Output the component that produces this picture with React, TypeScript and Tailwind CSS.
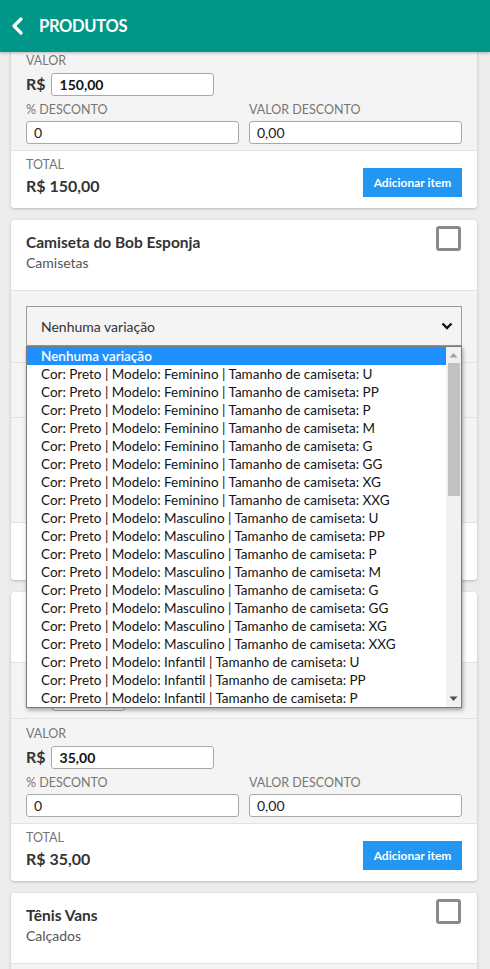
import React from "react";

const variations: string[] = [
  "Cor: Preto | Modelo: Feminino | Tamanho de camiseta: U",
  "Cor: Preto | Modelo: Feminino | Tamanho de camiseta: PP",
  "Cor: Preto | Modelo: Feminino | Tamanho de camiseta: P",
  "Cor: Preto | Modelo: Feminino | Tamanho de camiseta: M",
  "Cor: Preto | Modelo: Feminino | Tamanho de camiseta: G",
  "Cor: Preto | Modelo: Feminino | Tamanho de camiseta: GG",
  "Cor: Preto | Modelo: Feminino | Tamanho de camiseta: XG",
  "Cor: Preto | Modelo: Feminino | Tamanho de camiseta: XXG",
  "Cor: Preto | Modelo: Masculino | Tamanho de camiseta: U",
  "Cor: Preto | Modelo: Masculino | Tamanho de camiseta: PP",
  "Cor: Preto | Modelo: Masculino | Tamanho de camiseta: P",
  "Cor: Preto | Modelo: Masculino | Tamanho de camiseta: M",
  "Cor: Preto | Modelo: Masculino | Tamanho de camiseta: G",
  "Cor: Preto | Modelo: Masculino | Tamanho de camiseta: GG",
  "Cor: Preto | Modelo: Masculino | Tamanho de camiseta: XG",
  "Cor: Preto | Modelo: Masculino | Tamanho de camiseta: XXG",
  "Cor: Preto | Modelo: Infantil | Tamanho de camiseta: U",
  "Cor: Preto | Modelo: Infantil | Tamanho de camiseta: PP",
  "Cor: Preto | Modelo: Infantil | Tamanho de camiseta: P",
];

function Label({ children }: { children: React.ReactNode }) {
  return <div className="text-[12.5px] leading-[16px] text-[#767676] uppercase">{children}</div>;
}

function ValorSection({ valor, covered }: { valor: string; covered?: boolean }) {
  return (
    <div className="bg-[#f4f4f4] px-[15px] pt-[7px] pb-[6px] border-t border-[#e2e2e2]">
      <div className={covered ? "invisible" : ""}>
        <Label>Valor</Label>
        <div className="mt-[3px] flex items-center gap-[5px]">
          <span className="text-[16px] font-bold text-[#333]">R$</span>
          <div className="w-[163px] h-[23px] bg-white border border-[#a9a9a9] rounded-[3px] flex items-center pl-[8px] text-[14px] font-bold text-[#111]">
            {valor}
          </div>
        </div>
        <div className="mt-[6px] flex gap-[10px]">
          <div className="w-[213px]">
            <Label>% Desconto</Label>
            <div className="mt-[3px] h-[23px] bg-white border border-[#a9a9a9] rounded-[3px] flex items-center pl-[7px] text-[14px] text-[#222]">
              0
            </div>
          </div>
          <div className="w-[213px]">
            <Label>Valor desconto</Label>
            <div className="mt-[3px] h-[23px] bg-white border border-[#a9a9a9] rounded-[3px] flex items-center pl-[7px] text-[14px] text-[#222]">
              0,00
            </div>
          </div>
        </div>
      </div>
    </div>
  );
}

function TotalSection({ total, covered }: { total: string; covered?: boolean }) {
  return (
    <div className="bg-white border-t border-[#e2e2e2] px-[15px] pt-[6px] pb-[11px] rounded-b-[4px]">
      <div className={`flex justify-between items-end ${covered ? "invisible" : ""}`}>
        <div className="pb-[1px]">
          <Label>Total</Label>
          <div className="mt-[3px] text-[16px] leading-[20px] font-bold text-[#333]">{total}</div>
        </div>
        <button className="w-[99px] h-[29px] bg-[#2196f3] text-white text-[12px] font-bold">Adicionar item</button>
      </div>
    </div>
  );
}

function Checkbox() {
  return <div className="w-[25px] h-[25px] border-[3px] border-[#8a8a8a] rounded-[3px] bg-white" />;
}

function CardHeader({ title, subtitle }: { title?: string; subtitle?: string }) {
  return (
    <div className="h-[70px] bg-white flex justify-between pl-[15px] pr-[16px] pt-[6px] rounded-t-[4px]">
      <div className="pt-[6px]">
        {title && <div className="text-[15.5px] leading-[20px] font-bold text-[#333]">{title}</div>}
        {subtitle && <div className="mt-[2px] text-[14px] leading-[18px] text-[#555]">{subtitle}</div>}
      </div>
      <Checkbox />
    </div>
  );
}

function QtySection({ pt }: { pt: string }) {
  return (
    <div className={`bg-[#f4f4f4] border-t border-[#e2e2e2] pl-[41px] pb-[7px] ${pt}`}>
      <div className="w-[73px] h-[24px] bg-white border border-[#a9a9a9] rounded-[3px]" />
    </div>
  );
}

function Card({ children }: { children: React.ReactNode }) {
  return (
    <div className="ml-[11px] w-[466px] rounded-[4px] bg-white shadow-[0_1px_3px_rgba(0,0,0,0.22)] relative">
      {children}
    </div>
  );
}

export default function App() {
  return (
    <div
      className="relative w-[490px] h-[969px] overflow-hidden bg-[#ececec]"
      style={{ fontFamily: "Lato, 'Open Sans', sans-serif" }}
    >
      {/* app bar */}
      <div className="absolute top-0 left-0 right-0 h-[52px] bg-[#009688] z-20 flex items-center shadow-[0_1px_3px_rgba(0,0,0,0.25)]">
        <svg className="ml-[10px]" width="16" height="20" viewBox="0 0 16 20">
          <polyline points="11,3 4,10 11,17" fill="none" stroke="white" strokeWidth="3.2" strokeLinecap="round" strokeLinejoin="round" />
        </svg>
        <span className="ml-[13px] text-white text-[16.5px] font-bold tracking-[-0.3px]">PRODUTOS</span>
      </div>

      <div className="flex flex-col gap-[12px] pt-[45px]">
        {/* card 1 (scrolled) */}
        <Card>
          <ValorSection valor="150,00" />
          <TotalSection total="R$ 150,00" />
        </Card>

        {/* card 2 */}
        <Card>
          <CardHeader title="Camiseta do Bob Esponja" subtitle="Camisetas" />
          <div className="bg-[#f4f4f4] border-t border-[#e2e2e2] px-[15px] pt-[15px] pb-[16px]">
            <div className="relative z-10">
              <div className="h-[40px] border border-[#9a9a9a] bg-[#f4f4f4] flex items-center justify-between pl-[14px] pr-[8px] text-[14px] text-[#333]">
                <span>Nenhuma variação</span>
                <svg width="12" height="8" viewBox="0 0 12 8">
                  <polyline points="1.5,1.5 6,6 10.5,1.5" fill="none" stroke="#111" strokeWidth="2.4" strokeLinejoin="miter" />
                </svg>
              </div>
              {/* open list */}
              <div className="absolute left-0 right-0 top-[40px] h-[362px] bg-white border border-[#7a7a7a] shadow-[1px_2px_4px_rgba(0,0,0,0.35)] flex">
                <div className="flex-1 overflow-hidden">
                  <div className="h-[18px] bg-[#1e90ff] text-white text-[13.5px] leading-[18px] pl-[14px] font-semibold">
                    Nenhuma variação
                  </div>
                  {variations.map((v) => (
                    <div key={v} className="h-[18px] text-[13.5px] leading-[18px] pl-[14px] text-[#141414] whitespace-nowrap">
                      {v}
                    </div>
                  ))}
                </div>
                <div className="w-[15px] bg-[#f1f1f1] flex flex-col items-center">
                  <svg className="mt-[5px]" width="9" height="6" viewBox="0 0 9 6">
                    <polygon points="0.5,5.5 4.5,1 8.5,5.5" fill="#a3a3a3" />
                  </svg>
                  <div className="mt-[5px] w-[12px] h-[133px] bg-[#c1c1c1]" />
                  <div className="flex-1" />
                  <svg className="mb-[5px]" width="9" height="6" viewBox="0 0 9 6">
                    <polygon points="0.5,0.5 4.5,5 8.5,0.5" fill="#505050" />
                  </svg>
                </div>
              </div>
            </div>
          </div>
          <QtySection pt="pt-[23px]" />
          <ValorSection valor="150,00" covered />
          <TotalSection total="R$ 150,00" covered />
        </Card>

        {/* card 3 */}
        <Card>
          <CardHeader />
          <QtySection pt="pt-[24px]" />
          <ValorSection valor="35,00" />
          <TotalSection total="R$ 35,00" />
        </Card>

        {/* card 4 */}
        <Card>
          <CardHeader title="Tênis Vans" subtitle="Calçados" />
          <div className="bg-[#f4f4f4] border-t border-[#e2e2e2] h-[80px]" />
        </Card>
      </div>
    </div>
  );
}
